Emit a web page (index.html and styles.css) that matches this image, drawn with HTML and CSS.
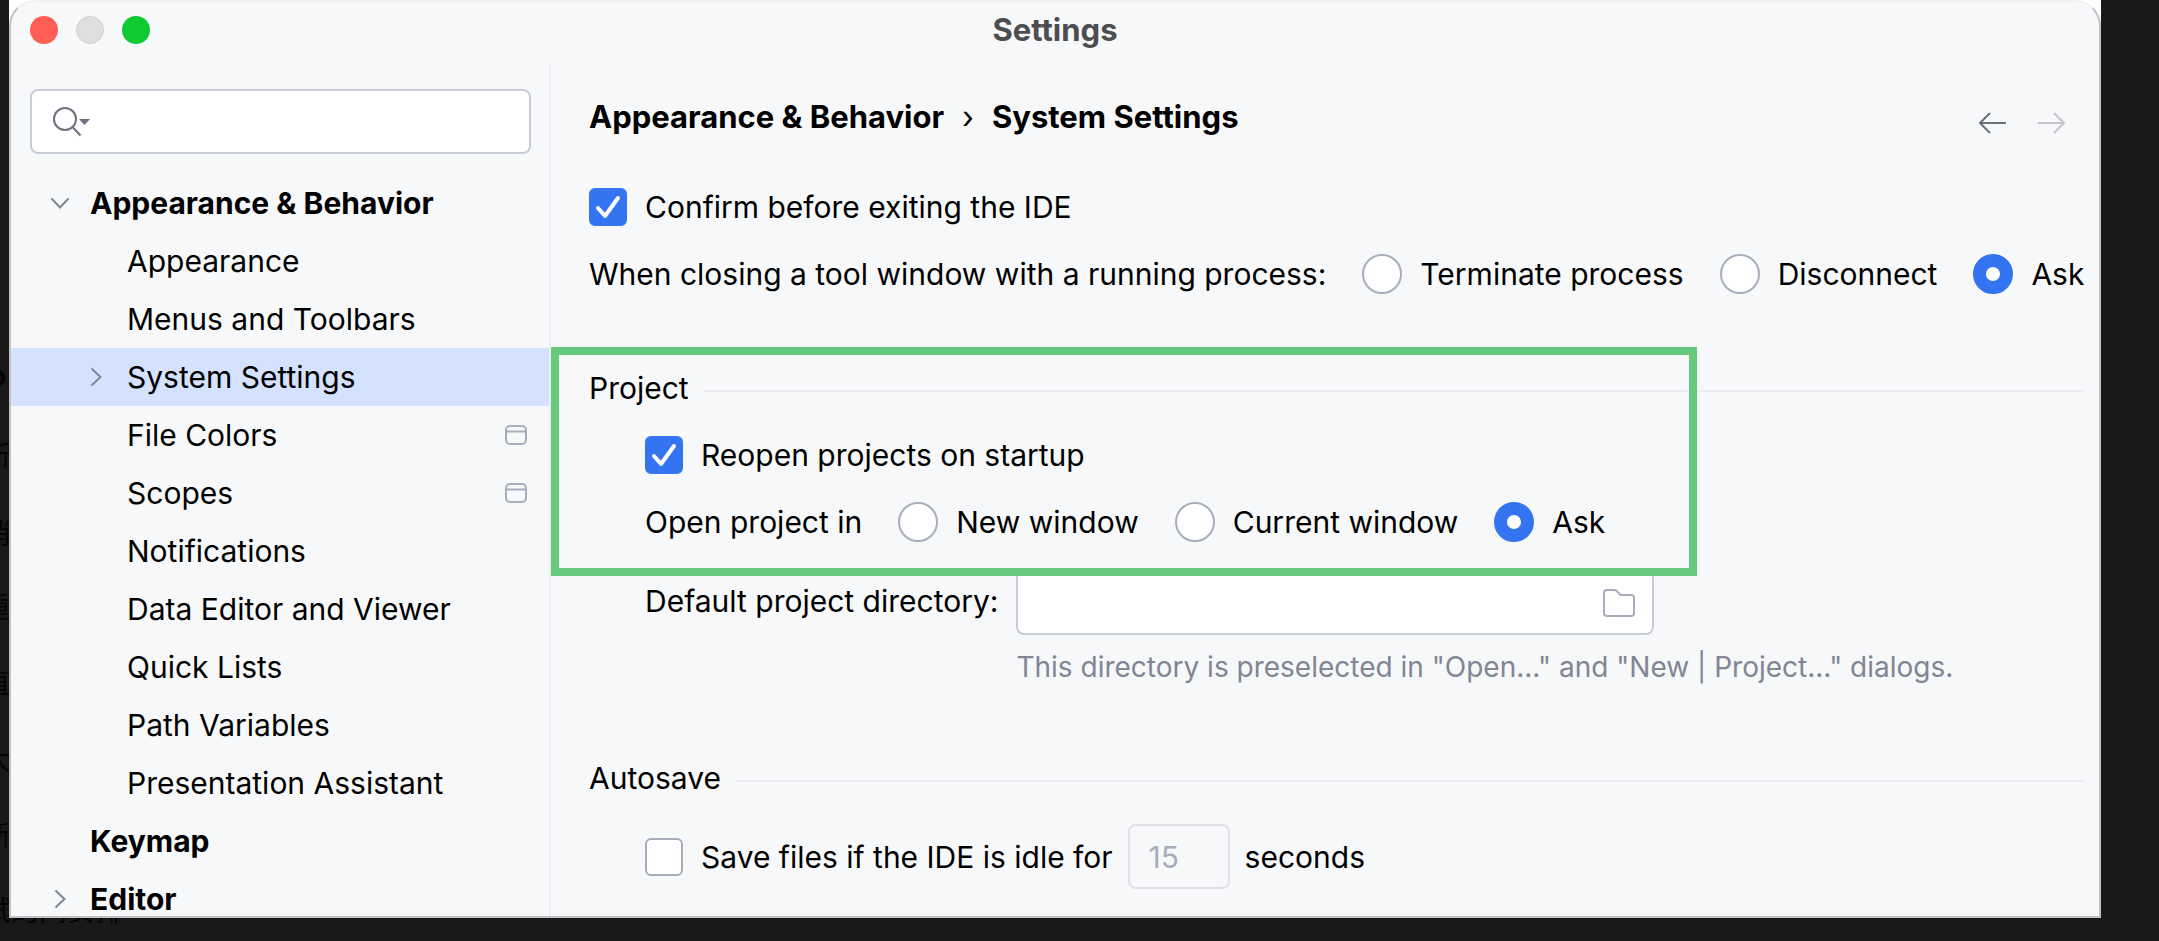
FILE: index.html
```html
<!DOCTYPE html>
<html lang="en">
<head>
<meta charset="utf-8">
<title>Settings</title>
<link rel="stylesheet" href="styles.css">
</head>
<body>
<div class="backdrop" aria-hidden="true">
  <span class="ghost ghost-a">o</span>
  <span class="ghost ghost-b">所</span>
  <span class="ghost ghost-c">消</span>
  <span class="ghost ghost-d">重</span>
  <span class="ghost ghost-e">直</span>
  <span class="ghost ghost-f">大</span>
  <span class="ghost ghost-g">新</span>
  <span class="ghost ghost-h">试的间安排</span>
</div>
<div class="frame">
<div class="window">
  <header class="titlebar">
    <div class="lights">
      <button class="light light-close" aria-label="Close"></button>
      <button class="light light-min" aria-label="Minimize"></button>
      <button class="light light-zoom" aria-label="Zoom"></button>
    </div>
    <h1 class="title">Settings</h1>
  </header>
  <div class="body">
    <nav class="sidebar">
      <div class="search">
        <svg class="search-icon" width="38" height="32" viewBox="0 0 38 32" fill="none" stroke="#6c707e" stroke-width="2"><circle cx="13" cy="13" r="11"/><path d="M20.500 21l8 8.500"/><path d="M27 13h11l-5.500 6z" fill="#6c707e" stroke="none"/></svg>
        <input class="search-input" type="text" aria-label="Search settings">
      </div>
      <ul class="tree">
        <li class="row top"><svg class="chev" viewBox="0 0 20 20"><path d="M1.500 5.500L10 14.500l8.500-9"/></svg>Appearance &amp; Behavior</li>
        <li class="row child">Appearance</li>
        <li class="row child">Menus and Toolbars</li>
        <li class="row child selected"><svg class="chev" viewBox="0 0 20 20"><path d="M5.500 1.500L14.500 10l-9 8.500"/></svg>System Settings</li>
        <li class="row child">File Colors<svg class="badge" viewBox="0 0 22 20"><rect x="1" y="1" width="20" height="18" rx="4"/><path d="M1 6.500h20"/></svg></li>
        <li class="row child">Scopes<svg class="badge" viewBox="0 0 22 20"><rect x="1" y="1" width="20" height="18" rx="4"/><path d="M1 6.500h20"/></svg></li>
        <li class="row child">Notifications</li>
        <li class="row child">Data Editor and Viewer</li>
        <li class="row child">Quick Lists</li>
        <li class="row child">Path Variables</li>
        <li class="row child">Presentation Assistant</li>
        <li class="row top">Keymap</li>
        <li class="row top"><svg class="chev" viewBox="0 0 20 20"><path d="M5.500 1.500L14.500 10l-9 8.500"/></svg>Editor</li>
      </ul>
    </nav>
    <main class="content">
      <div class="head">
        <h2 class="crumbs"><span>Appearance &amp; Behavior</span><span class="sep">›</span><span>System Settings</span></h2>
        <div class="arrows">
          <button class="arrow" aria-label="Back"><svg viewBox="0 0 28 22"><path d="M28 11H2M12 1L2 11l10 10"/></svg></button>
          <button class="arrow off" aria-label="Forward" disabled><svg viewBox="0 0 28 22"><path d="M0 11h26M16 1l10 10-10 10"/></svg></button>
        </div>
      </div>
      <div class="line line-confirm">
        <label class="opt"><input class="check" type="checkbox" checked>Confirm before exiting the IDE</label>
      </div>
      <div class="line line-closing" role="radiogroup" aria-label="When closing a tool window">
        <span>When closing a tool window with a running process:</span>
        <label class="opt"><input class="radio" type="radio" name="closing">Terminate process</label>
        <label class="opt"><input class="radio" type="radio" name="closing">Disconnect</label>
        <label class="opt"><input class="radio" type="radio" name="closing" checked>Ask</label>
      </div>
      <section class="project">
        <h3 class="group">Project</h3>
        <div class="line inner">
          <label class="opt"><input class="check" type="checkbox" checked>Reopen projects on startup</label>
        </div>
        <div class="line inner" role="radiogroup" aria-label="Open project in">
          <span>Open project in</span>
          <label class="opt"><input class="radio" type="radio" name="open">New window</label>
          <label class="opt"><input class="radio" type="radio" name="open">Current window</label>
          <label class="opt"><input class="radio" type="radio" name="open" checked>Ask</label>
        </div>
      </section>
      <div class="directory">
        <label class="dir-label" for="dir">Default project directory:</label>
        <div class="field">
          <input class="field-input" id="dir" type="text" aria-describedby="dir-hint">
          <button class="browse" aria-label="Browse"><svg viewBox="0 0 34 30"><path d="M2 5a3 3 0 0 1 3-3h7.500a3 3 0 0 1 2.200 1L18.500 7H29a3 3 0 0 1 3 3v15a3 3 0 0 1-3 3H5a3 3 0 0 1-3-3z"/></svg></button>
        </div>
        <p class="hint" id="dir-hint">This directory is preselected in "Open..." and "New | Project..." dialogs.</p>
      </div>
      <section class="autosave">
        <h3 class="group">Autosave</h3>
        <div class="line idle">
          <label class="opt"><input class="check" type="checkbox">Save files if the IDE is idle for</label>
          <input class="seconds" type="text" value="15" aria-label="Idle seconds" disabled>
          <span>seconds</span>
        </div>
      </section>
    </main>
  </div>
</div>
</div>
</body>
</html>
```
FILE: styles.css
```css
*, *::before, *::after { box-sizing: border-box; }

body {
  margin: 0;
  height: 100vh;
  padding: 0 58px 23px 9px;
  background: #191919;
  color: #000;
  font: 30px/40px Inter, "Noto Sans", sans-serif;
  overflow: hidden;
}

h1, h2, h3, p, ul { margin: 0; padding: 0; font: inherit; }

button { padding: 0; border: 0; background: none; }

/* Page text showing round the edges of the window */
.backdrop { position: absolute; inset: 0; overflow: hidden; }
.ghost {
  position: absolute;
  left: -17px;
  color: #050505;
  font: 28px/40px "Noto Sans CJK SC", sans-serif;
  white-space: nowrap;
}
.ghost-a { left: -11px; top: 354px; font-weight: 700; }
.ghost-b { top: 434px; }
.ghost-c { top: 512px; }
.ghost-d { top: 586px; }
.ghost-e { top: 662px; }
.ghost-f { top: 738px; }
.ghost-g { top: 814px; }
.ghost-h { top: 889px; }

.frame { position: relative; height: 100%; background: #fff; }

.window {
  height: 100%;
  display: flex;
  flex-direction: column;
  background: #f7f8fa;
  border: 2px solid #bfc1c4;
  border-top-color: #f0f1f2;
  border-radius: 26px 26px 0 0;
  overflow: hidden;
}

.titlebar {
  display: grid;
  grid-template-columns: 1fr auto 1fr;
  align-items: center;
  flex: none;
  height: 62px;
  padding: 0 19px 6px;
}
.lights { display: flex; gap: 18px; }
.light { width: 28px; height: 28px; border-radius: 50%; }
.light-close { background: #ff5d55; }
.light-min { background: #dfdfdf; border: 1px solid #cfcfcf; }
.light-zoom { background: #0fca33; }
.title { color: #4d4d4f; font-size: 31px; font-weight: 700; }

.body { display: flex; flex: 1; min-height: 0; }

.sidebar {
  flex: none;
  width: 540px;
  border-right: 2px solid #ebecf0;
  overflow: hidden;
}
.search {
  display: flex;
  align-items: center;
  height: 65px;
  margin: 25px 18px 20px 19px;
  padding: 0 20px;
  background: #fff;
  border: 2px solid #c9ccd6;
  border-radius: 8px;
}
.search-icon { flex: none; }
.search-input { flex: 1; min-width: 0; border: 0; background: none; font: inherit; outline: 0; }

.tree { list-style: none; }
.row {
  position: relative;
  display: flex;
  align-items: center;
  height: 58px;
  padding-bottom: 1px;
}
.top { padding-left: 79px; font-weight: 700; }
.child { padding-left: 116px; }
.selected { background: #d4e2ff; }
.chev {
  position: absolute;
  left: 39px;
  width: 20px;
  height: 20px;
  fill: none;
  stroke: #818594;
  stroke-width: 2;
}
.child .chev { left: 75px; }
.badge {
  width: 22px;
  height: 20px;
  margin: 0 22px 0 auto;
  fill: none;
  stroke: #a8adbd;
  stroke-width: 2;
}

.content { flex: 1; min-width: 0; padding: 33px 0 0; }
.head {
  display: flex;
  justify-content: space-between;
  padding: 0 33px 0 38px;
}
.crumbs { display: flex; gap: 18px; font-size: 31px; font-weight: 700; }
.sep { font-weight: 400; }
.arrows { display: flex; gap: 32px; padding-top: 15px; }
.arrow { width: 28px; height: 22px; }
.arrow svg { display: block; fill: none; stroke: #6c707e; stroke-width: 2; }
.arrow.off svg { stroke: #c4c6cc; }

.line {
  display: flex;
  align-items: center;
  gap: 36px;
  padding-left: 38px;
  white-space: nowrap;
}
.line-confirm { margin-top: 50px; }
.line-closing { margin-top: 27px; }
.opt { display: flex; align-items: center; gap: 18px; }

.check, .radio {
  appearance: none;
  flex: none;
  margin: 0;
  background: #fff center no-repeat;
  border: 2px solid #a8adbd;
}
.check { width: 38px; height: 38px; border-radius: 6px; }
.check:checked {
  border-color: #3574f0;
  background-color: #3574f0;
  background-image: url("data:image/svg+xml,%3Csvg xmlns='http://www.w3.org/2000/svg' width='28' height='24' fill='none' stroke='white' stroke-width='4' stroke-linecap='round' stroke-linejoin='round'%3E%3Cpath d='M4 13l7 8L24 3'/%3E%3C/svg%3E");
}
.radio { width: 40px; height: 40px; border-radius: 50%; }
.radio:checked { border: 13px solid #3574f0; }

.group {
  display: flex;
  align-items: center;
  gap: 15px;
  padding: 0 15px 0 38px;
}
.group::after { content: ""; flex: 1; height: 2px; margin-top: 5px; background: #ebecf0; }

.project { position: relative; margin-top: 53px; padding: 21px 0 34px; }
.project::after {
  content: "";
  position: absolute;
  inset: 0 auto 0 0;
  width: 74%;
  border: 8px solid #67c97b;
  pointer-events: none;
}
.inner { padding-left: 94px; margin-top: 27px; }

.directory {
  display: grid;
  grid-template-columns: auto 638px;
  justify-content: start;
  column-gap: 18px;
  row-gap: 12px;
  align-items: center;
  padding-left: 94px;
  margin-top: -6px;
}
.dir-label { padding-bottom: 3px; }
.field {
  display: flex;
  align-items: center;
  height: 65px;
  padding: 0 16px;
  background: #fff;
  border: 2px solid #c9ccd6;
  border-radius: 8px;
}
.field-input { flex: 1; min-width: 0; border: 0; background: none; font: inherit; outline: 0; }
.browse { width: 34px; height: 30px; }
.browse svg { display: block; fill: none; stroke: #a8adbd; stroke-width: 2; }
.hint { grid-column: 2; color: #818594; font-size: 28px; white-space: nowrap; }

.autosave { margin-top: 71px; }
.idle { gap: 15px; padding-left: 94px; margin-top: 26px; }
.seconds {
  width: 102px;
  height: 65px;
  padding: 0 19px;
  border: 2px solid #dfe1e5;
  border-radius: 8px;
  background: none;
  color: #a8adbd;
  font: inherit;
}
```
